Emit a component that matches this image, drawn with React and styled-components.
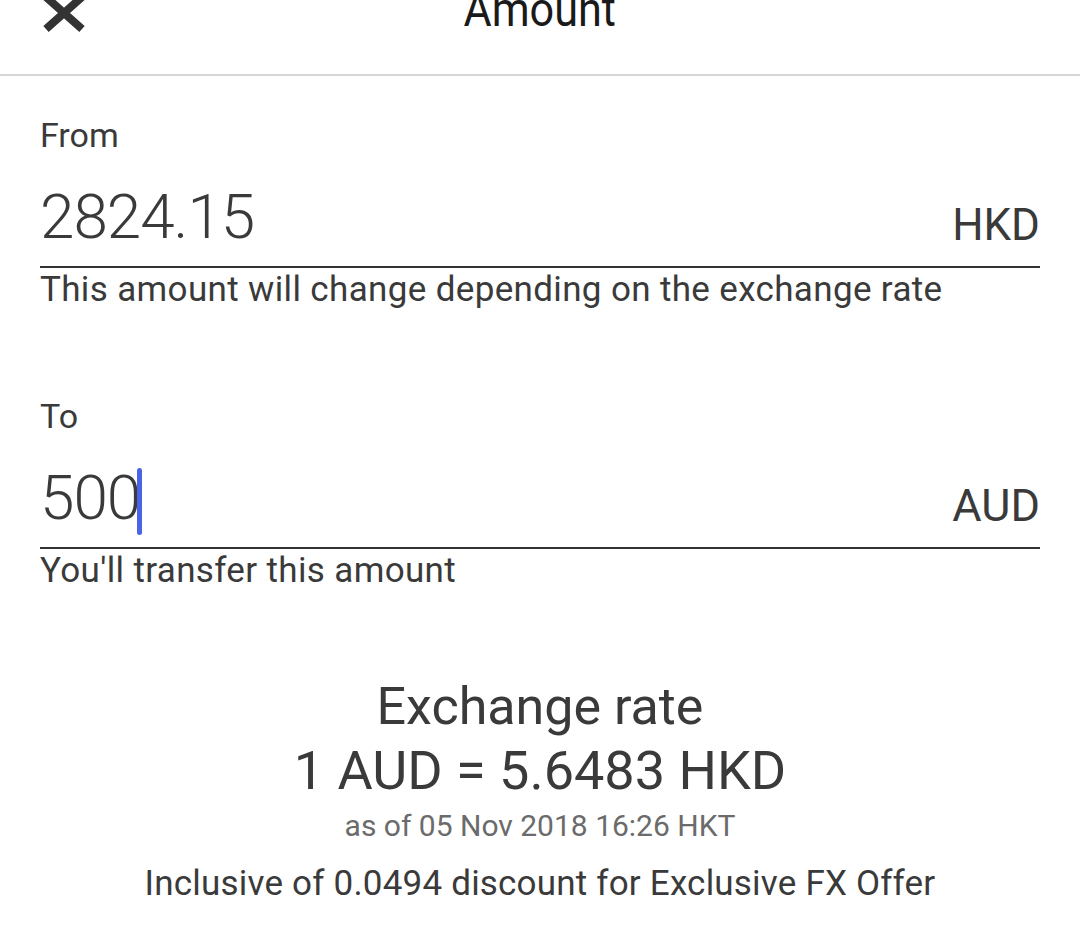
import React from "react";
import styled, { createGlobalStyle } from "styled-components";

const GlobalStyle = createGlobalStyle`
  html, body {
    margin: 0;
    padding: 0;
    background: #ffffff;
  }
  body {
    font-family: Roboto, "Liberation Sans", Arial, sans-serif;
    color: #333333;
    overflow: hidden;
  }
`;

const Page = styled.div`
  width: 1080px;
  height: 946px;
  background: #fff;
  overflow: hidden;
`;

const Header = styled.header`
  display: flex;
  flex-direction: column;
  height: 74px;
  border-bottom: 2px solid #d6d6d6;
`;

// the top of the modal bar is scrolled off screen, so the row starts above the page
const HeaderRow = styled.div`
  display: flex;
  align-items: center;
  justify-content: center;
  position: relative;
  height: 60px;
  margin-top: -20px;
`;

const CloseButton = styled.button`
  position: absolute;
  left: 40px;
  top: 13px;
  width: 48px;
  height: 40px;
  padding: 0;
  border: none;
  background: none;
  display: flex;
`;

const Title = styled.h1`
  margin: 0;
  font-size: 48px;
  line-height: 60px;
  font-weight: 400;
  color: #1a1a1a;
  transform: scaleX(0.9);
`;

const Body = styled.main`
  padding: 0 40px;
  display: flex;
  flex-direction: column;
`;

const Field = styled.section`
  display: flex;
  flex-direction: column;
  padding-top: ${(p) => p.top || "0px"};
`;

const Label = styled.div`
  font-size: 34px;
  line-height: 40px;
  color: #3a3a3a;
`;

const InputRow = styled.div`
  display: flex;
  align-items: flex-end;
  justify-content: space-between;
  border-bottom: 2px solid #333;
  padding-bottom: 19px;
  margin-top: 32px;
`;

const Amount = styled.div`
  display: flex;
  align-items: center;
  height: 60px;
  font-size: 62px;
  line-height: 60px;
  font-weight: 300;
  letter-spacing: -1px;
  color: #3a3a3a;
`;

const Caret = styled.span`
  display: inline-block;
  flex: none;
  width: 5px;
  height: 67px;
  border-radius: 3px;
  background: #4a64e8;
  margin-left: -3px;
  margin-top: 6px;
`;

const Currency = styled.div`
  font-size: ${(p) => p.size || "44px"};
  line-height: 44px;
  color: #3a3a3a;
`;

const Hint = styled.div`
  font-size: 35px;
  line-height: 44px;
  letter-spacing: 0.35px;
  color: #3a3a3a;
  white-space: nowrap;
`;

const Rate = styled.section`
  display: flex;
  flex-direction: column;
  align-items: center;
  text-align: center;
  margin-top: 83px;
`;

const RateTitle = styled.div`
  font-size: 52px;
  line-height: 62px;
  color: #3a3a3a;
`;

const RateValue = styled.div`
  font-size: 54px;
  line-height: 66px;
  color: #3a3a3a;
`;

const RateDate = styled.div`
  font-size: 30px;
  line-height: 44px;
  color: #6b6b6b;
`;

const RateNote = styled.div`
  font-size: 35px;
  line-height: 72px;
  letter-spacing: 0.2px;
  color: #3a3a3a;
  white-space: nowrap;
`;

function CloseIcon() {
  return (
    <svg width="48" height="40" viewBox="0 0 48 40">
      <path
        d="M6 4 L42 36 M42 4 L6 36"
        stroke="#333"
        strokeWidth="8"
        strokeLinecap="butt"
        fill="none"
      />
    </svg>
  );
}

export default function App() {
  return (
    <Page>
      <GlobalStyle />
      <Header>
        <HeaderRow>
          <CloseButton aria-label="Close">
            <CloseIcon />
          </CloseButton>
          <Title>Amount</Title>
        </HeaderRow>
      </Header>
      <Body>
        <Field top="39px">
          <Label>From</Label>
          <InputRow>
            <Amount>2824.15</Amount>
            <Currency>HKD</Currency>
          </InputRow>
          <Hint>This amount will change depending on the exchange rate</Hint>
        </Field>
        <Field top="84px">
          <Label>To</Label>
          <InputRow>
            <Amount>
              500
              <Caret />
            </Amount>
            <Currency size="45px">AUD</Currency>
          </InputRow>
          <Hint>You'll transfer this amount</Hint>
        </Field>
        <Rate>
          <RateTitle>Exchange rate</RateTitle>
          <RateValue>1 AUD = 5.6483 HKD</RateValue>
          <RateDate>as of 05 Nov 2018 16:26 HKT</RateDate>
          <RateNote>Inclusive of 0.0494 discount for Exclusive FX Offer</RateNote>
        </Rate>
      </Body>
    </Page>
  );
}
